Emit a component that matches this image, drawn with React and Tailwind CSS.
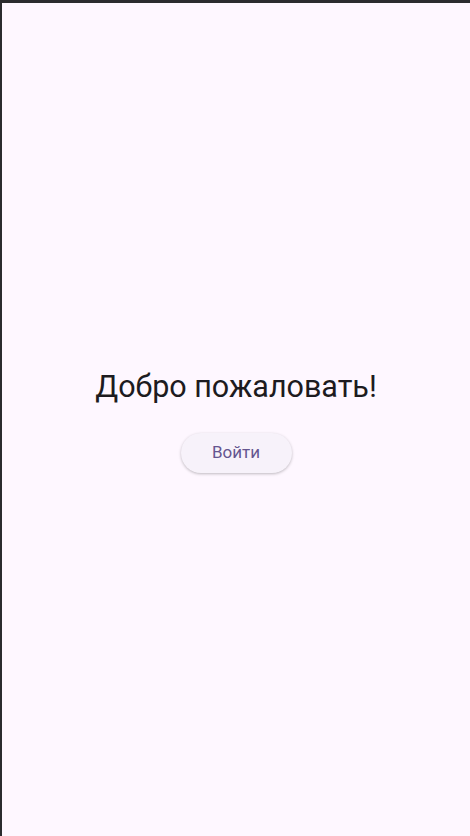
export default function App() {
  return (
    <div className="flex h-[836px] w-[470px] flex-col border-l-2 border-t-[3px] border-[#2b2b2e] bg-[#fef7ff] font-['Roboto',sans-serif]">
      <div className="flex flex-1 flex-col items-center justify-center">
        <h1 className="text-[30.5px] leading-[40px] text-[#1d1b20]">Добро пожаловать!</h1>
        <button className="mt-[26px] h-[40px] w-[111px] rounded-full bg-[#f7f2fa] text-[17px] text-[#65558f] shadow-[0_1px_3px_rgba(0,0,0,0.25)]">
          Войти
        </button>
      </div>
    </div>
  )
}
